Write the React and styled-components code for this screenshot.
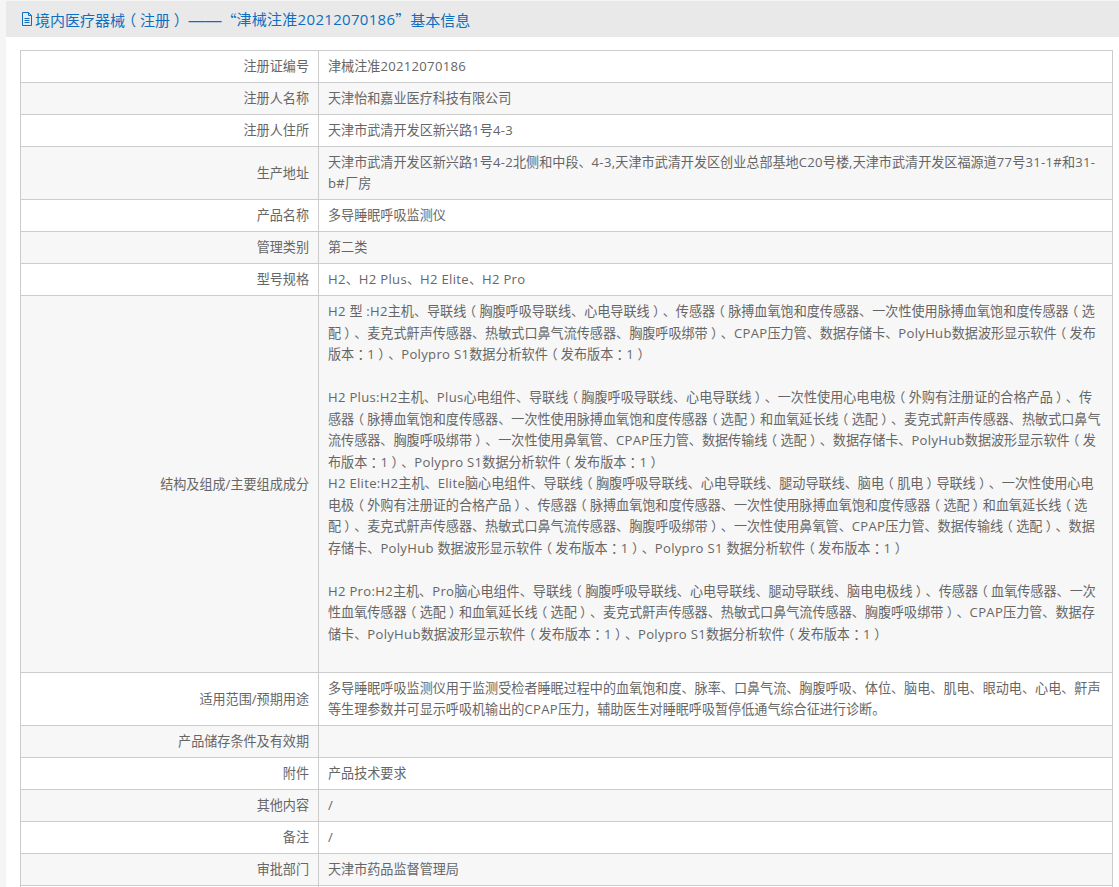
import React from "react";
import styled, { createGlobalStyle } from "styled-components";

const GlobalStyle = createGlobalStyle`
  html, body {
    margin: 0;
    padding: 0;
    height: 887px;
    overflow: hidden;
    background: #f5f5f5;
    font-family: "Open Sans", "Noto Sans CJK SC", sans-serif;
    text-spacing-trim: space-all;
  }
`;

const Panel = styled.div`
  margin: 1px 0 0 6px;
  background: #fff;
  padding-bottom: 20px;
`;

const Title = styled.div`
  display: flex;
  align-items: center;
  height: 36px;
  padding-left: 15px;
  background: #e9e9e9;
  color: #0e6fc0;
  font-size: 15px;
  white-space: pre;
`;

const FileIcon = styled.svg`
  width: 12px;
  height: 14px;
  margin-right: 2px;
  flex: none;
`;

const Cjk = styled.span`
  font-family: "Noto Sans CJK SC", sans-serif;
`;

const Dash = styled.span`
  font-family: "Liberation Sans", sans-serif;
  font-size: 16.5px;
  line-height: 0;
`;

const Latin = styled.span`
  letter-spacing: 0.3px;
  line-height: 0;
`;

const Paren = styled.span`
  display: inline-block;
  width: 1em;
  text-align: center;
  font-family: "Noto Sans CJK SC", sans-serif;
  font-feature-settings: "halt";
  line-height: 0;
`;

const Table = styled.table`
  width: 1093px;
  margin: 13px 0 0 14px;
  border-collapse: collapse;
  table-layout: fixed;
  font-size: 13.1px;
  line-height: 21px;
  color: #666;
`;

const Row = styled.tr`
  background: ${(p) => (p.$shaded ? "#f7f7f7" : "#fff")};
`;

const Label = styled.td`
  width: 288px;
  padding: 5px 9px 5px 0;
  border: 1px solid #ccc;
  text-align: right;
`;

const Value = styled.td`
  padding: 5px 9px;
  border: 1px solid #ccc;
  text-align: left;
  white-space: nowrap;
  height: 21px;
  line-height: ${(p) => (p.$long ? "21.53px" : "21px")};
`;

const rows = [
  ["注册证编号", ["津械注准20212070186"]],
  ["注册人名称", ["天津怡和嘉业医疗科技有限公司"]],
  ["注册人住所", ["天津市武清开发区新兴路1号4-3"]],
  ["生产地址", ["天津市武清开发区新兴路1号4-2北侧和中段、4-3,天津市武清开发区创业总部基地C20号楼,天津市武清开发区福源道77号31-1#和31-", "b#厂房"]],
  ["产品名称", ["多导睡眠呼吸监测仪"]],
  ["管理类别", ["第二类"]],
  ["型号规格", ["H2、H2 Plus、H2 Elite、H2 Pro"]],
  ["结构及组成/主要组成成分", [
    "H2 型 :H2主机、导联线（胸腹呼吸导联线、心电导联线）、传感器（脉搏血氧饱和度传感器、一次性使用脉搏血氧饱和度传感器（选",
    "配）、麦克式鼾声传感器、热敏式口鼻气流传感器、胸腹呼吸绑带）、CPAP压力管、数据存储卡、PolyHub数据波形显示软件（发布",
    "版本：1）、Polypro S1数据分析软件（发布版本：1）",
    "",
    "H2 Plus:H2主机、Plus心电组件、导联线（胸腹呼吸导联线、心电导联线）、一次性使用心电电极（外购有注册证的合格产品）、传",
    "感器（脉搏血氧饱和度传感器、一次性使用脉搏血氧饱和度传感器（选配）和血氧延长线（选配）、麦克式鼾声传感器、热敏式口鼻气",
    "流传感器、胸腹呼吸绑带）、一次性使用鼻氧管、CPAP压力管、数据传输线（选配）、数据存储卡、PolyHub数据波形显示软件（发",
    "布版本：1）、Polypro S1数据分析软件（发布版本：1）",
    "H2 Elite:H2主机、Elite脑心电组件、导联线（胸腹呼吸导联线、心电导联线、腿动导联线、脑电（肌电）导联线）、一次性使用心电",
    "电极（外购有注册证的合格产品）、传感器（脉搏血氧饱和度传感器、一次性使用脉搏血氧饱和度传感器（选配）和血氧延长线（选",
    "配）、麦克式鼾声传感器、热敏式口鼻气流传感器、胸腹呼吸绑带）、一次性使用鼻氧管、CPAP压力管、数据传输线（选配）、数据",
    "存储卡、PolyHub 数据波形显示软件（发布版本：1）、Polypro S1 数据分析软件（发布版本：1）",
    "",
    "H2 Pro:H2主机、Pro脑心电组件、导联线（胸腹呼吸导联线、心电导联线、腿动导联线、脑电电极线）、传感器（血氧传感器、一次",
    "性血氧传感器（选配）和血氧延长线（选配）、麦克式鼾声传感器、热敏式口鼻气流传感器、胸腹呼吸绑带）、CPAP压力管、数据存",
    "储卡、PolyHub数据波形显示软件（发布版本：1）、Polypro S1数据分析软件（发布版本：1）",
    "",
    "",
  ]],
  ["适用范围/预期用途", [
    "多导睡眠呼吸监测仪用于监测受检者睡眠过程中的血氧饱和度、脉率、口鼻气流、胸腹呼吸、体位、脑电、肌电、眼动电、心电、鼾声",
    "等生理参数并可显示呼吸机输出的CPAP压力，辅助医生对睡眠呼吸暂停低通气综合征进行诊断。",
  ]],
  ["产品储存条件及有效期", [""]],
  ["附件", ["产品技术要求"]],
  ["其他内容", ["/"]],
  ["备注", ["/"]],
  ["审批部门", ["天津市药品监督管理局"]],
  ["", [""]],
];

// latin runs get a little tracking, full-width brackets sit centred in their em box
function Line({ text }) {
  return text.split(/([A-Za-z0-9 :#,\-]+|[（）：])/).map((part, i) => {
    if (/^[（）：]$/.test(part)) return <Paren key={i}>{part}</Paren>;
    if (/^[A-Za-z0-9 :#,\-]+$/.test(part)) return <Latin key={i}>{part}</Latin>;
    return part;
  });
}

export default function App() {
  return (
    <>
      <GlobalStyle />
      <Panel>
        <Title>
          <FileIcon viewBox="0 0 12 14" fill="none" stroke="#0e6fc0" strokeWidth="1">
            <path d="M1.5 .5h6l3 3v10h-9z" />
            <path d="M7.5 .5v3h3M3.5 6.5h5M3.5 8.5h5M3.5 10.5h5" />
          </FileIcon>
          <Cjk>境内医疗器械<Paren>（</Paren>注册<Paren>）</Paren> <Dash>——</Dash>“</Cjk>
          <Latin>津械注准20212070186</Latin>
          <Cjk>”基本信息</Cjk>
        </Title>
        <Table>
          <tbody>
            {rows.map(([label, lines], i) => (
              <Row key={i} $shaded={i % 2 === 1}>
                <Label>{label}</Label>
                <Value $long={lines.length > 2}>
                  {lines.map((line, j) => (
                    <React.Fragment key={j}>
                      <Line text={line} />
                      {j < lines.length - 1 && <br />}
                    </React.Fragment>
                  ))}
                </Value>
              </Row>
            ))}
          </tbody>
        </Table>
      </Panel>
    </>
  );
}
